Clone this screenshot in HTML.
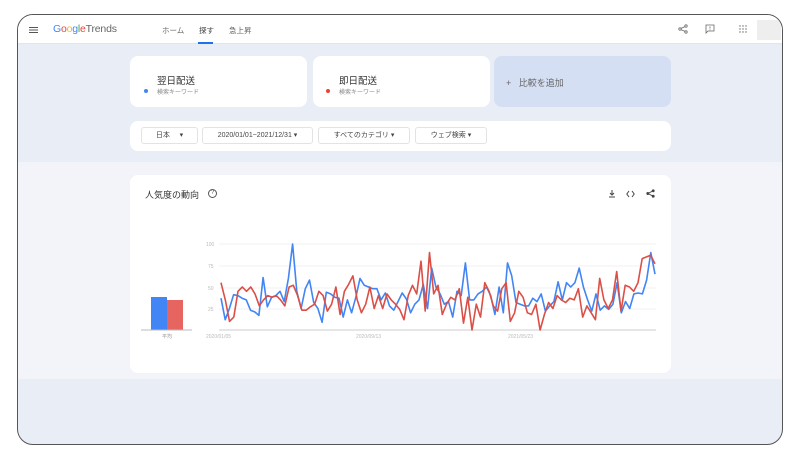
<!DOCTYPE html>
<html><head><meta charset="utf-8">
<style>
*{margin:0;padding:0;box-sizing:border-box}
body{width:800px;height:460px;background:#fff;position:relative;overflow:hidden;font-family:"Liberation Sans","Noto Sans CJK JP",sans-serif;color:#3c4043}
.frame{position:absolute;left:17px;top:14px;width:766px;height:431px;border:1.5px solid #555;border-radius:16px;overflow:hidden;background:#e9edf6}
.hdr{position:absolute;left:0;top:0;width:100%;height:29px;background:#fff;border-bottom:1px solid #e2e5ec}
.band{position:absolute;left:0;top:147px;width:100%;height:217px;background:#f3f4f9}
.abs{position:absolute}
.card{position:absolute;background:#fff;border-radius:8px}
.t{position:absolute;white-space:nowrap}
.btn{position:absolute;top:6px;height:17px;border:1px solid #e3e3e3;border-radius:3px;font-size:7px;color:#444;line-height:15px;text-align:center}
</style></head><body>
<div class="frame">
 <div class="hdr">
  <div class="abs" style="left:11px;top:12px;width:9px;height:1.2px;background:#555;box-shadow:0 2.5px 0 #555,0 5px 0 #555"></div>
  <div class="t" style="left:35px;top:8px;font-size:10.5px;letter-spacing:-0.2px"><span style="color:#4285f4">G</span><span style="color:#ea4335">o</span><span style="color:#fbbc05">o</span><span style="color:#4285f4">g</span><span style="color:#34a853">l</span><span style="color:#ea4335">e</span><span style="color:#666">Trends</span></div>
  <div class="t" style="left:144px;top:10px;font-size:7.5px;color:#666">ホーム</div>
  <div class="t" style="left:181px;top:10px;font-size:7.5px;color:#444">探す</div>
  <div class="abs" style="left:180px;top:27px;width:15px;height:2px;background:#1a73e8"></div>
  <div class="t" style="left:211px;top:10px;font-size:7.5px;color:#666">急上昇</div>
  <svg class="abs" style="left:660px;top:9px" width="10" height="10" viewBox="0 0 10 10"><circle cx="8" cy="2" r="1.2" fill="none" stroke="#666" stroke-width=".8"/><circle cx="2" cy="5" r="1.2" fill="none" stroke="#666" stroke-width=".8"/><circle cx="8" cy="8" r="1.2" fill="none" stroke="#666" stroke-width=".8"/><path d="M3 4.4 7 2.6M3 5.6 7 7.4" stroke="#666" stroke-width=".8"/></svg>
  <svg class="abs" style="left:687px;top:9px" width="10" height="10" viewBox="0 0 10 10"><path d="M1 1h8v6H3L1 9z" fill="none" stroke="#666" stroke-width=".8"/><path d="M5 2.5v2M5 5.5v.7" stroke="#666" stroke-width=".8"/></svg>
  <svg class="abs" style="left:721px;top:10px" width="8" height="8" viewBox="0 0 8 8" fill="#666"><circle cx="1" cy="1" r=".7"/><circle cx="4" cy="1" r=".7"/><circle cx="7" cy="1" r=".7"/><circle cx="1" cy="4" r=".7"/><circle cx="4" cy="4" r=".7"/><circle cx="7" cy="4" r=".7"/><circle cx="1" cy="7" r=".7"/><circle cx="4" cy="7" r=".7"/><circle cx="7" cy="7" r=".7"/></svg>
  <div class="abs" style="left:739px;top:5px;width:24px;height:20px;background:#eee"></div>
 </div>
 <div class="band"></div>
 <div class="card" style="left:112px;top:41px;width:177px;height:51px">
  <div class="abs" style="left:14px;top:33px;width:4px;height:4px;border-radius:50%;background:#4285f4"></div>
  <div class="t" style="left:27px;top:17px;font-size:9.5px;color:#333">翌日配送</div>
  <div class="t" style="left:27px;top:31px;font-size:6px;color:#888">検索キーワード</div>
 </div>
 <div class="card" style="left:295px;top:41px;width:177px;height:51px">
  <div class="abs" style="left:13px;top:33px;width:4px;height:4px;border-radius:50%;background:#ea4335"></div>
  <div class="t" style="left:26px;top:17px;font-size:9.5px;color:#333">即日配送</div>
  <div class="t" style="left:26px;top:31px;font-size:6px;color:#888">検索キーワード</div>
 </div>
 <div class="card" style="left:476px;top:41px;width:177px;height:51px;background:#d5dff3">
  <div class="t" style="left:12px;top:20px;font-size:9px;color:#666">+&nbsp;&nbsp;&nbsp;比較を追加</div>
 </div>
 <div class="card" style="left:112px;top:106px;width:541px;height:30px">
  <div class="btn" style="left:11px;width:57px">日本&nbsp;&nbsp;&nbsp;&nbsp;&nbsp;▾</div>
  <div class="btn" style="left:72px;width:111px">2020/01/01~2021/12/31 ▾</div>
  <div class="btn" style="left:188px;width:92px">すべてのカテゴリ ▾</div>
  <div class="btn" style="left:285px;width:72px">ウェブ検索 ▾</div>
 </div>
 <div class="card" style="left:112px;top:160px;width:541px;height:198px">
  <div class="t" style="left:15px;top:13px;font-size:9px;color:#333">人気度の動向</div>
  <div class="abs" style="left:78px;top:14px;width:9px;height:9px;border:1px solid #555;border-radius:50%;font-size:6px;text-align:center;line-height:7px;color:#555">?</div>
  <svg class="abs" style="left:478px;top:15px" width="8" height="8" viewBox="0 0 8 8"><path d="M4 0v5M2 3l2 2 2-2M1 7h6" stroke="#444" fill="none" stroke-width="1"/></svg>
  <svg class="abs" style="left:496px;top:15px" width="9" height="8" viewBox="0 0 9 8"><path d="M3 1 0.8 4 3 7M6 1l2.2 3L6 7" stroke="#444" fill="none" stroke-width="1"/></svg>
  <svg class="abs" style="left:516px;top:14px" width="9" height="9" viewBox="0 0 10 10" fill="#444"><circle cx="8" cy="2" r="1.6"/><circle cx="2" cy="5" r="1.6"/><circle cx="8" cy="8" r="1.6"/><path d="M2 5 8 2M2 5l6 3" stroke="#444" stroke-width="1"/></svg>
 </div>
</div>
<svg class="abs" style="left:0;top:0;position:absolute" width="800" height="460">
 <rect x="151" y="297" width="16" height="33" fill="#4285f4"/>
 <rect x="167" y="300" width="16" height="30" fill="#e66560"/>
 <line x1="141" y1="330" x2="192" y2="330" stroke="#bbb" stroke-width="1"/>
 <text x="162" y="338" font-size="5" fill="#999" font-family="Liberation Sans,Noto Sans CJK JP,sans-serif">平均</text>
 <g stroke="#eee" stroke-width=".8"><line x1="219" y1="244" x2="656" y2="244"/><line x1="219" y1="266" x2="656" y2="266"/><line x1="219" y1="288" x2="656" y2="288"/><line x1="219" y1="309" x2="656" y2="309"/></g>
 <line x1="219" y1="330" x2="656" y2="330" stroke="#bbb" stroke-width=".8"/>
 <g font-size="5" fill="#bbb" font-family="Liberation Sans,sans-serif"><text x="206" y="246">100</text><text x="208" y="268">75</text><text x="208" y="290">50</text><text x="208" y="311">25</text>
 <text x="206" y="338">2020/01/05</text><text x="356" y="338">2020/09/13</text><text x="508" y="338">2021/05/23</text></g>
 <polyline id="b" fill="none" stroke="#4285f4" stroke-width="1.6" stroke-linejoin="round"/>
 <polyline id="r" fill="none" stroke="#db4f46" stroke-width="1.6" stroke-linejoin="round"/>
</svg>
<script>
var B=[37,12,25,41,40,37,35,23,21,17,61,27,38,40,45,33,60,100,45,25,48,58,32,25,9,44,42,38,37,15,35,20,38,60,52,50,48,48,35,43,28,23,33,43,36,20,30,35,53,25,72,50,42,30,33,15,45,40,78,35,35,42,45,50,40,18,50,20,78,63,32,30,28,28,37,33,42,22,28,33,56,35,55,50,55,72,50,35,22,42,23,28,24,30,55,20,33,25,42,43,42,58,90,65];
var R=[55,35,10,15,45,50,45,50,42,28,35,40,38,40,35,28,50,52,40,23,23,27,30,45,40,22,30,50,18,45,53,63,35,20,30,50,25,40,25,42,35,30,24,12,40,52,42,80,22,90,42,52,18,30,38,35,48,8,38,0,30,15,55,45,28,22,48,55,10,20,45,38,20,18,30,0,18,32,25,40,35,32,37,35,48,15,28,20,12,60,35,25,35,68,22,52,50,45,55,83,85,87,77];
function p(a){var s=[],n=a.length;for(var i=0;i<n;i++){s.push((221+i*(434/(n-1))).toFixed(1)+","+(330-a[i]*0.86).toFixed(1));}return s.join(" ");}
document.getElementById('b').setAttribute('points',p(B));
document.getElementById('r').setAttribute('points',p(R));
</script>
</body></html>
